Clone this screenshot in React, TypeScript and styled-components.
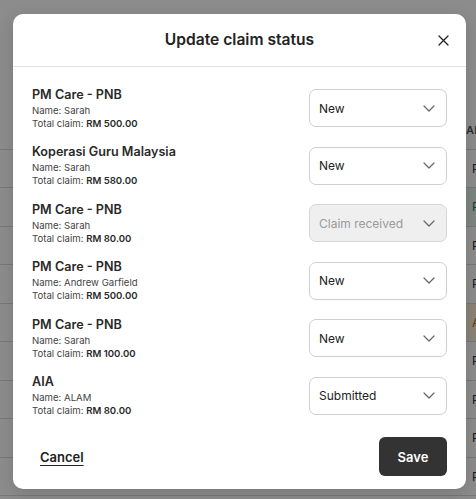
import React from "react";
import styled, { createGlobalStyle } from "styled-components";

const GlobalStyle = createGlobalStyle`
  html, body {
    margin: 0;
    padding: 0;
    overflow: hidden;
    background: #ffffff;
    font-family: Inter, "Liberation Sans", Arial, sans-serif;
  }
`;

// background page (the claims table behind the modal)
const Page = styled.div`
  position: relative;
  width: 476px;
  height: 499px;
  overflow: hidden;
  background: #ffffff;
`;

const Table = styled.div`
  display: flex;
  flex-direction: column;
  padding-top: 111px;
`;

const TableRow = styled.div`
  display: grid;
  grid-template-columns: 466px 1fr;
  height: 38.5px;
  box-sizing: border-box;
  border-bottom: 1px solid #d9d9d9;
  font-size: 12px;
  color: #333;
`;

const HeadRow = styled(TableRow)`
  font-size: 11px;
  font-weight: 600;
  color: #555;
  letter-spacing: 0.3px;
`;

const Cell = styled.div<{ $tone?: "green" | "amber"; $head?: boolean }>`
  display: flex;
  align-items: center;
  padding-left: ${(p) => (p.$head ? "0" : "6px")};
  white-space: nowrap;
  overflow: hidden;
  color: ${(p) => (p.$tone === "green" ? "#1f7a3f" : p.$tone === "amber" ? "#c0630e" : "inherit")};
  background: ${(p) => (p.$tone === "green" ? "#e6f4ea" : p.$tone === "amber" ? "#fbefd9" : "transparent")};
`;

const Overlay = styled.div`
  position: absolute;
  inset: 0;
  background: rgba(0, 0, 0, 0.45);
  display: flex;
  align-items: flex-start;
  padding: 14px 10px 0 13px;
`;

const Modal = styled.div`
  width: 453px;
  height: 475px;
  background: #ffffff;
  border-radius: 10px;
  display: flex;
  flex-direction: column;
  box-shadow: 0 4px 16px rgba(0, 0, 0, 0.15);
`;

const Header = styled.div`
  position: relative;
  height: 52px;
  display: flex;
  align-items: center;
  justify-content: center;
  border-bottom: 1px solid #e2e2e2;
  flex-shrink: 0;
`;

const Title = styled.h2`
  margin: 0;
  font-size: 15.6px;
  line-height: 20px;
  font-weight: 600;
  color: #222;
`;

const CloseBtn = styled.button`
  position: absolute;
  top: 16px;
  right: 13px;
  width: 20px;
  height: 20px;
  border: none;
  padding: 0;
  background: transparent;
  display: flex;
  align-items: center;
  justify-content: center;
  cursor: pointer;
`;

const Body = styled.div`
  display: flex;
  flex-direction: column;
  gap: 19.6px;
  padding: 22px 19px 0 19px;
`;

const ClaimRow = styled.div`
  display: flex;
  align-items: center;
  justify-content: space-between;
  height: 38px;
`;

const Info = styled.div`
  display: flex;
  flex-direction: column;
`;

const Provider = styled.div`
  font-size: 12.6px;
  line-height: 16px;
  font-weight: 600;
  color: #2a2a2a;
  margin-bottom: 1px;
`;

const Meta = styled.div`
  font-size: 9.6px;
  line-height: 13px;
  color: #444;

  b {
    font-weight: 600;
    color: #2a2a2a;
  }
`;

const Select = styled.div<{ $disabled?: boolean }>`
  width: 138px;
  height: 38px;
  box-sizing: border-box;
  border: 1px solid ${(p) => (p.$disabled ? "#d6d6d6" : "#cfcfcf")};
  border-radius: 7px;
  background: ${(p) => (p.$disabled ? "#efefef" : "#fff")};
  display: flex;
  align-items: center;
  justify-content: space-between;
  padding: 0 11px 0 9px;
  font-size: 12px;
  color: ${(p) => (p.$disabled ? "#9a9a9a" : "#222")};
`;

const Footer = styled.div`
  margin-top: auto;
  display: flex;
  align-items: center;
  justify-content: space-between;
  padding: 0 19px 13px 27px;
`;

const CancelBtn = styled.button`
  border: none;
  background: transparent;
  padding: 0;
  font-family: inherit;
  font-size: 13px;
  font-weight: 600;
  color: #222;
  text-decoration: underline;
  text-underline-offset: 3px;
  cursor: pointer;
`;

const SaveBtn = styled.button`
  width: 68px;
  height: 39px;
  border: none;
  border-radius: 6px;
  background: #333333;
  color: #fff;
  font-family: inherit;
  font-size: 13px;
  font-weight: 600;
  cursor: pointer;
`;

const Chevron = () => (
  <svg width="12" height="7" viewBox="0 0 12 7" fill="none">
    <path d="M1 1l5 5 5-5" stroke="#666" strokeWidth="1.2" strokeLinecap="round" strokeLinejoin="round" />
  </svg>
);

const CloseIcon = () => (
  <svg width="11" height="11" viewBox="0 0 11 11" fill="none">
    <path d="M1 1l9 9M10 1l-9 9" stroke="#222" strokeWidth="1.3" strokeLinecap="round" />
  </svg>
);

type Claim = {
  provider: string;
  name: string;
  total: string;
  status: string;
  disabled?: boolean;
};

const claims: Claim[] = [
  { provider: "PM Care - PNB", name: "Sarah", total: "RM 500.00", status: "New" },
  { provider: "Koperasi Guru Malaysia", name: "Sarah", total: "RM 580.00", status: "New" },
  { provider: "PM Care - PNB", name: "Sarah", total: "RM 80.00", status: "Claim received", disabled: true },
  { provider: "PM Care - PNB", name: "Andrew Garfield", total: "RM 500.00", status: "New" },
  { provider: "PM Care - PNB", name: "Sarah", total: "RM 100.00", status: "New" },
  { provider: "AIA", name: "ALAM", total: "RM 80.00", status: "Submitted" },
];

const bgRows: { text: string; tone?: "green" | "amber" }[] = [
  { text: "P" },
  { text: "P", tone: "green" },
  { text: "P" },
  { text: "P" },
  { text: "A", tone: "amber" },
  { text: "P" },
  { text: "P" },
  { text: "P" },
  { text: "P" },
];

export default function App() {
  return (
    <>
      <GlobalStyle />
      <Page>
        <Table>
          <HeadRow>
            <Cell />
            <Cell $head>AI</Cell>
          </HeadRow>
          {bgRows.map((r, i) => (
            <TableRow key={i}>
              <Cell />
              <Cell $tone={r.tone}>{r.text}</Cell>
            </TableRow>
          ))}
        </Table>

        <Overlay>
          <Modal>
            <Header>
              <Title>Update claim status</Title>
              <CloseBtn aria-label="Close">
                <CloseIcon />
              </CloseBtn>
            </Header>
            <Body>
              {claims.map((c, i) => (
                <ClaimRow key={i}>
                  <Info>
                    <Provider>{c.provider}</Provider>
                    <Meta>Name: {c.name}</Meta>
                    <Meta>
                      Total claim: <b>{c.total}</b>
                    </Meta>
                  </Info>
                  <Select $disabled={c.disabled}>
                    <span>{c.status}</span>
                    <Chevron />
                  </Select>
                </ClaimRow>
              ))}
            </Body>
            <Footer>
              <CancelBtn>Cancel</CancelBtn>
              <SaveBtn>Save</SaveBtn>
            </Footer>
          </Modal>
        </Overlay>
      </Page>
    </>
  );
}
